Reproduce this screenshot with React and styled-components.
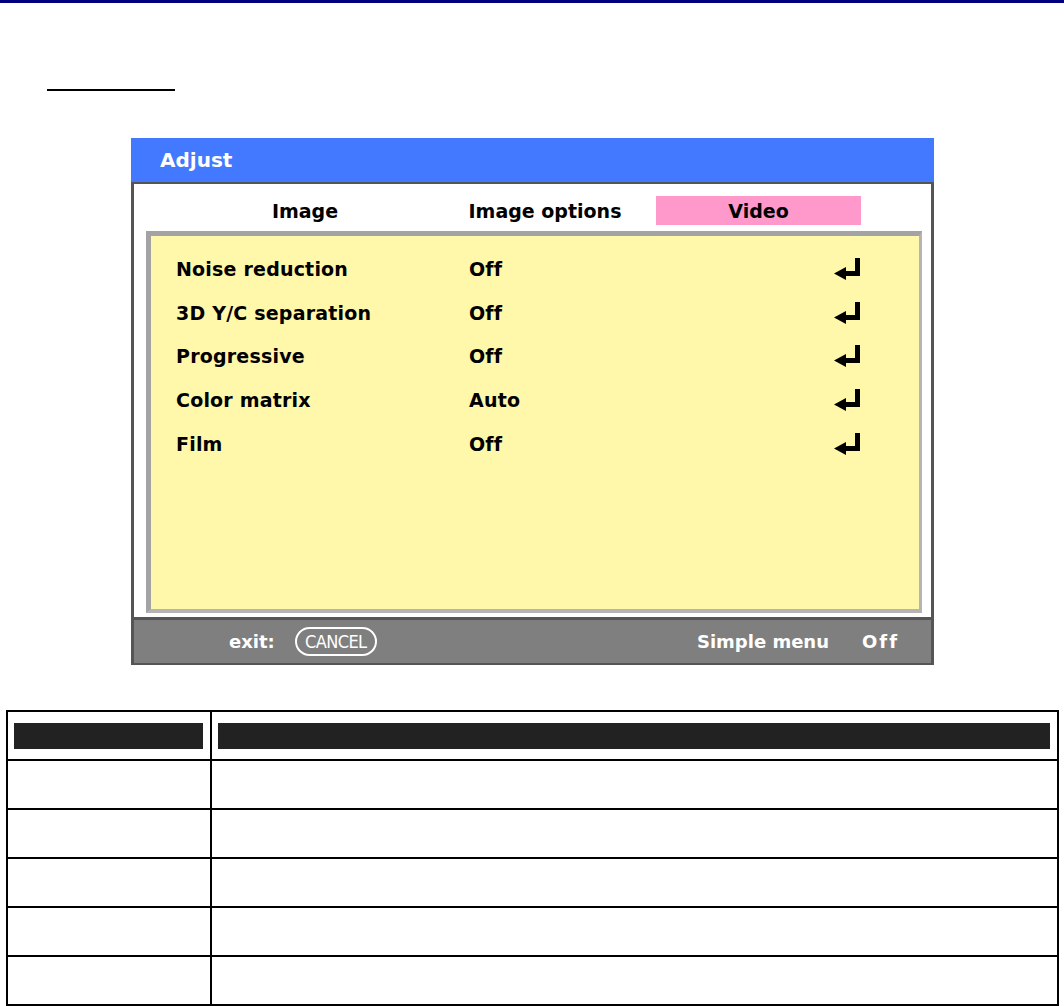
import React from 'react';
import styled, { createGlobalStyle } from 'styled-components';

const GlobalStyle = createGlobalStyle`
  body {
    margin: 0;
    background: #fff;
    font-family: "DejaVu Sans", "Liberation Sans", sans-serif;
  }
`;

const TopRule = styled.div`
  height: 3px;
  background: #00007f;
`;

const SectionLine = styled.div`
  margin: 86px 0 0 47px;
  width: 128px;
  height: 2px;
  background: #000;
`;

const Osd = styled.div`
  margin: 47px 0 0 131px;
  width: 803px;
`;

const TitleBar = styled.div`
  height: 44px;
  display: flex;
  align-items: center;
  padding-left: 29px;
  background: #4279ff;
  color: #fff;
  font-size: 20px;
  font-weight: bold;
`;

const Body = styled.div`
  border: 3px solid #555;
  border-top-width: 2px;
  background: #fff;
  padding: 0 9px 4px 12px;
`;

const Tabs = styled.div`
  height: 47px;
  display: flex;
  align-items: flex-start;
  padding: 12px 0 0 56px;
  box-sizing: border-box;
`;

const Tab = styled.div`
  width: ${p => p.$width}px;
  margin-left: ${p => p.$ml || 0}px;
  height: 29px;
  line-height: 30px;
  text-align: center;
  font-size: 19px;
  font-weight: bold;
  color: #000;
  background: ${p => (p.$active ? '#ff99cc' : 'transparent')};
`;

const Sheet = styled.div`
  height: 382px;
  box-sizing: border-box;
  background: #fff7aa;
  border-style: solid;
  border-color: #a3a3a3 #b4b4b4 #b4b4b4 #a3a3a3;
  border-width: 5px 3px 4px 5px;
  padding: 11px 59px 0 25px;
`;

const Row = styled.div`
  height: 43.75px;
  display: grid;
  grid-template-columns: 293px 1fr auto;
  align-items: center;
  font-size: 19px;
  font-weight: bold;
  color: #000;
  letter-spacing: 0.2px;
`;

const Footer = styled.div`
  height: 43px;
  display: flex;
  align-items: center;
  background: #7f7f7f;
  border: 3px solid #555;
  border-top: 0;
  border-bottom-width: 2px;
  padding: 0 31px 0 95px;
  color: #fff;
  font-size: 18px;
  font-weight: bold;
`;

const Pill = styled.span`
  margin-left: 20px;
  height: 25px;
  width: 78px;
  border: 2px solid #fff;
  border-radius: 15px;
  display: flex;
  align-items: center;
  justify-content: center;
  font-family: "DejaVu Sans Condensed", "DejaVu Sans", sans-serif;
  font-weight: normal;
  font-size: 18px;
  letter-spacing: -0.6px;
`;

const Spacer = styled.span`
  flex: 1;
`;

const Setting = styled.span`
  margin-left: ${p => p.$ml || 0}px;
  ${p => p.$width && `width: ${p.$width}px; letter-spacing: 2px;`}
`;

const Table = styled.div`
  margin: 45px 0 0 6px;
  width: 1053px;
  display: grid;
  grid-template-columns: 204px 847px;
  border-top: 2px solid #000;
  border-left: 2px solid #000;
  box-sizing: border-box;
`;

const Cell = styled.div`
  height: ${p => (p.$head ? 26 : 47)}px;
  padding: ${p => (p.$head ? '11px 7px 10px 6px' : '0')};
  border-right: 2px solid #000;
  border-bottom: 2px solid #000;
`;

const HeadBar = styled.div`
  height: 26px;
  background: #222;
`;

const ReturnIcon = () => (
  <svg width="26" height="22" viewBox="0 0 26 22">
    <rect x="21" y="0" width="5" height="18" fill="#000" />
    <rect x="10" y="13" width="16" height="5" fill="#000" />
    <polygon points="0,15.5 12,9 12,22" fill="#000" />
  </svg>
);

const rows = [
  ['Noise reduction', 'Off'],
  ['3D Y/C separation', 'Off'],
  ['Progressive', 'Off'],
  ['Color matrix', 'Auto'],
  ['Film', 'Off'],
];

export default function App() {
  return (
    <>
      <GlobalStyle />
      <TopRule />
      <SectionLine />
      <Osd>
        <TitleBar>Adjust</TitleBar>
        <Body>
          <Tabs>
            <Tab $width={206}>Image</Tab>
            <Tab $width={210} $ml={32}>Image options</Tab>
            <Tab $width={205} $ml={6} $active>Video</Tab>
          </Tabs>
          <Sheet>
            {rows.map(([label, value]) => (
              <Row key={label}>
                <span>{label}</span>
                <span>{value}</span>
                <ReturnIcon />
              </Row>
            ))}
          </Sheet>
        </Body>
        <Footer>
          <span>exit:</span>
          <Pill>CANCEL</Pill>
          <Spacer />
          <Setting>Simple menu</Setting>
          <Setting $ml={33} $width={38}>Off</Setting>
        </Footer>
      </Osd>
      <Table>
        <Cell $head><HeadBar /></Cell>
        <Cell $head><HeadBar /></Cell>
        {Array.from({ length: 10 }).map((_, i) => (
          <Cell key={i} />
        ))}
      </Table>
    </>
  );
}
